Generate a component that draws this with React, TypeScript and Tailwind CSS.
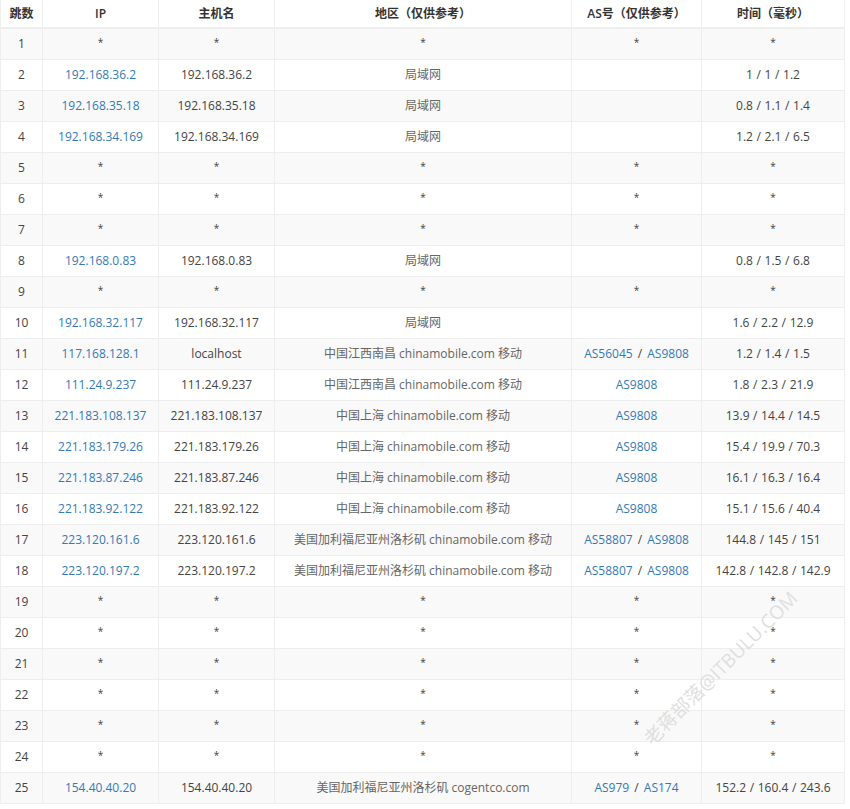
type Row = { ip?: string; host?: string; region?: string; asn?: string[]; time?: string };

const star: Row = {};
const rows: Row[] = [
  star,
  { ip: "192.168.36.2", host: "192.168.36.2", region: "局域网", asn: [], time: "1 / 1 / 1.2" },
  { ip: "192.168.35.18", host: "192.168.35.18", region: "局域网", asn: [], time: "0.8 / 1.1 / 1.4" },
  { ip: "192.168.34.169", host: "192.168.34.169", region: "局域网", asn: [], time: "1.2 / 2.1 / 6.5" },
  star,
  star,
  star,
  { ip: "192.168.0.83", host: "192.168.0.83", region: "局域网", asn: [], time: "0.8 / 1.5 / 6.8" },
  star,
  { ip: "192.168.32.117", host: "192.168.32.117", region: "局域网", asn: [], time: "1.6 / 2.2 / 12.9" },
  { ip: "117.168.128.1", host: "localhost", region: "中国江西南昌 chinamobile.com 移动", asn: ["AS56045", "AS9808"], time: "1.2 / 1.4 / 1.5" },
  { ip: "111.24.9.237", host: "111.24.9.237", region: "中国江西南昌 chinamobile.com 移动", asn: ["AS9808"], time: "1.8 / 2.3 / 21.9" },
  { ip: "221.183.108.137", host: "221.183.108.137", region: "中国上海 chinamobile.com 移动", asn: ["AS9808"], time: "13.9 / 14.4 / 14.5" },
  { ip: "221.183.179.26", host: "221.183.179.26", region: "中国上海 chinamobile.com 移动", asn: ["AS9808"], time: "15.4 / 19.9 / 70.3" },
  { ip: "221.183.87.246", host: "221.183.87.246", region: "中国上海 chinamobile.com 移动", asn: ["AS9808"], time: "16.1 / 16.3 / 16.4" },
  { ip: "221.183.92.122", host: "221.183.92.122", region: "中国上海 chinamobile.com 移动", asn: ["AS9808"], time: "15.1 / 15.6 / 40.4" },
  { ip: "223.120.161.6", host: "223.120.161.6", region: "美国加利福尼亚州洛杉矶 chinamobile.com 移动", asn: ["AS58807", "AS9808"], time: "144.8 / 145 / 151" },
  { ip: "223.120.197.2", host: "223.120.197.2", region: "美国加利福尼亚州洛杉矶 chinamobile.com 移动", asn: ["AS58807", "AS9808"], time: "142.8 / 142.8 / 142.9" },
  star,
  star,
  star,
  star,
  star,
  star,
  { ip: "154.40.40.20", host: "154.40.40.20", region: "美国加利福尼亚州洛杉矶 cogentco.com", asn: ["AS979", "AS174"], time: "152.2 / 160.4 / 243.6" },
];

const th = "border border-[#eeeeee] border-t-0 border-b-2 font-semibold text-[#333] h-[28px] p-0 text-center";
const td = "border border-[#eeeeee] h-[31px] p-0 text-center";

function Star() {
  return <span className="text-[10px] text-[#444] [vertical-align:2px]">*</span>;
}

export default function App() {
  return (
    <div className="relative w-[850px] h-[809px] overflow-hidden bg-white text-[12px] text-[#444] font-['Open_Sans','Noto_Sans_CJK_SC',sans-serif]">
      <table className="w-[845px] table-fixed border-collapse">
        <thead>
          <tr>
            <th className={`${th} w-[42px]`}>跳数</th>
            <th className={`${th} w-[116px]`}>IP</th>
            <th className={`${th} w-[116px]`}>主机名</th>
            <th className={`${th} w-[297px]`}>地区（仅供参考）</th>
            <th className={`${th} w-[130px]`}>AS号（仅供参考）</th>
            <th className={th}>时间（毫秒）</th>
          </tr>
        </thead>
        <tbody>
          {rows.map((row, i) => (
            <tr key={i} className={i % 2 === 0 ? "bg-[#f9f9f9]" : "bg-white"}>
              <td className={td}>{i + 1}</td>
              <td className={`${td} text-[#337ab7]`}>{row.ip ?? <Star />}</td>
              <td className={td}>{row.host ?? <Star />}</td>
              <td className={`${td} text-[#666]`}>{row.region ?? <Star />}</td>
              <td className={`${td} [word-spacing:2px]`}>
                {row.asn ? (
                  row.asn.map((as, j) => (
                    <span key={as}>
                      {j > 0 ? " / " : null}
                      <span className="text-[#337ab7]">{as}</span>
                    </span>
                  ))
                ) : (
                  <Star />
                )}
              </td>
              <td className={`${td} [word-spacing:0.5px]`}>{row.time ?? <Star />}</td>
            </tr>
          ))}
        </tbody>
      </table>
      <div className="absolute left-[617px] top-[654px] -rotate-45 origin-center whitespace-nowrap text-[19px] text-[#d8d8d8]/80 pointer-events-none">
        老蒋部落@ITBULU.COM
      </div>
    </div>
  );
}
